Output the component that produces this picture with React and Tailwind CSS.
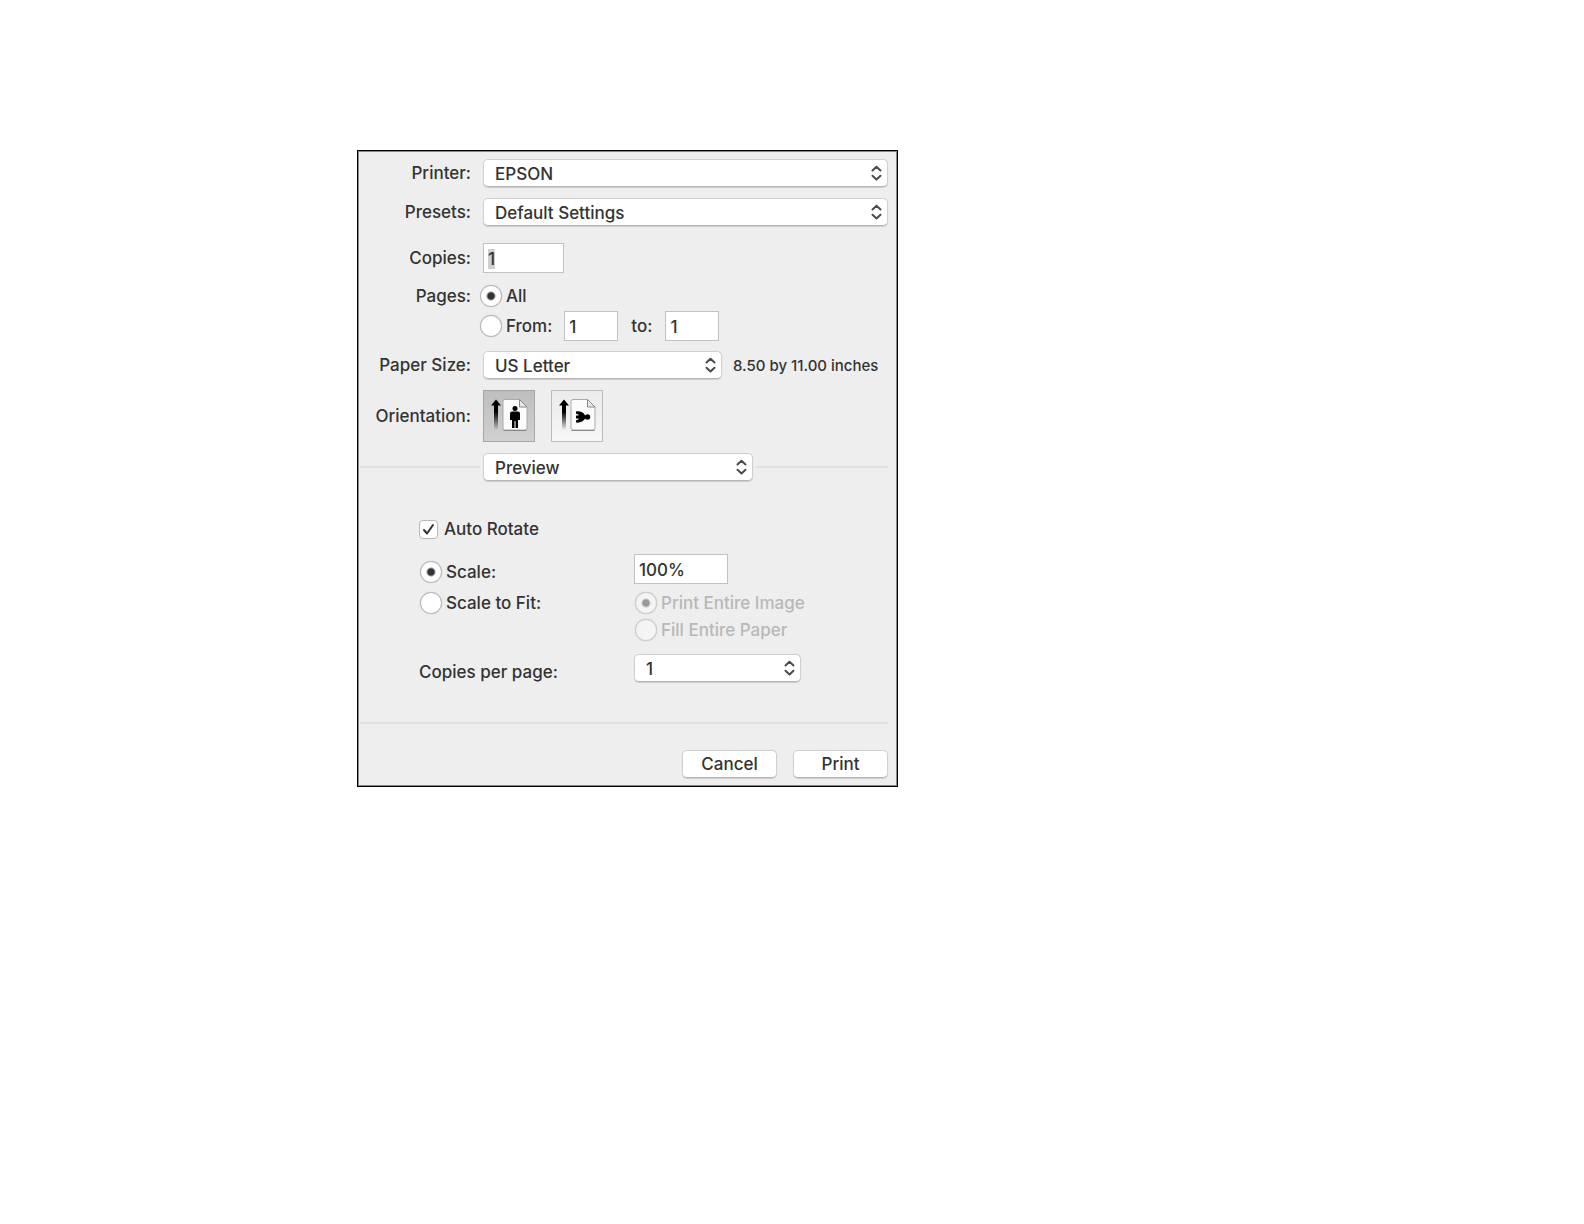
import React, { useEffect, useRef, useState } from 'react';

const inputClass =
  'h-[30px] border border-[#c2c2c2] bg-white pl-1 pt-[2px] text-[17px] font-medium text-[#333] outline-none';

const Select = ({ id, options, className }) => (
  <div className={`relative ${className}`}>
    <select
      id={id}
      className="block h-7 w-full appearance-none rounded-[5px] border border-[#d0d0d0] border-b-[#b4b4b4] bg-white pl-[11px] pr-7 pt-px text-[17px] font-medium leading-6 text-[#333] shadow-[0_1px_1px_rgba(0,0,0,0.14)] outline-none"
    >
      {options.map((option) => (
        <option key={option}>{option}</option>
      ))}
    </select>
    <svg
      className="pointer-events-none absolute right-1.5 top-1.5 h-4 w-[11px]"
      viewBox="0 0 11 16"
      fill="none"
      stroke="#4a4a4a"
      strokeWidth="2"
      strokeLinecap="round"
      strokeLinejoin="round"
    >
      <path d="M1.5 5.5 5.5 1.8 9.5 5.5M1.5 10.8 5.5 14.5 9.5 10.8" />
    </svg>
  </div>
);

const Radio = ({ label, ...props }) => (
  <label className="flex h-6 items-center gap-1 whitespace-nowrap has-disabled:text-[#b8b8b8]">
    <input
      type="radio"
      className="size-[22px] shrink-0 appearance-none rounded-full border border-[#b8b8b8] bg-white shadow-[0_0_1px_rgba(0,0,0,0.25)] checked:bg-[radial-gradient(circle,#333_3px,transparent_5px)] disabled:border-[#cfcfcf] disabled:bg-[#f4f4f4] disabled:checked:bg-[radial-gradient(circle,#999_3px,transparent_5px)]"
      {...props}
    />
    {label}
  </label>
);

const OrientationIcon = ({ landscape }) => {
  const fade = landscape ? 'fade-landscape' : 'fade-portrait';
  return (
    <svg className="size-full" viewBox="0 0 50 50">
      <defs>
        <linearGradient id={fade} x1="0" y1="0" x2="0" y2="1">
          <stop offset="0.3" stopColor="#000" />
          <stop offset="1" stopColor="#000" stopOpacity="0" />
        </linearGradient>
      </defs>
      {/* Feed direction arrow */}
      <path d="M12 8.5 17 14.5H7Z" fill="#000" />
      <rect x="10" y="13" width="4" height="26" fill={`url(#${fade})`} />
      {/* Sheet with folded corner */}
      <path d="M21 8.5H35.5L43 16V37Q43 39 41 39H21Q19 39 19 37V10.5Q19 8.5 21 8.5Z" fill="#fbfbfb" stroke="#aaa" />
      <path d="M19.5 39.5H42.5" stroke="#888" />
      <path d="M35.5 8.5V16H43Z" fill="#e8e8e8" stroke="#888" />
      {landscape ? (
        <g fill="#000">
          <circle cx="35.5" cy="26" r="2.7" />
          <rect x="31" y="25" width="4" height="2" />
          <path d="M33 24.2C31.5 21.6 28.5 20 24 20.4V22.8L26.5 23.6V24.6H24V27.4H26.5V28.4L24 29.2V31.6C28.5 32 31.5 30.4 33 27.8Z" />
        </g>
      ) : (
        <g fill="#000">
          <circle cx="31" cy="17.5" r="2.5" />
          <path d="M28 20.5H34Q36 20.5 36 22.5V29H34V37H31.5V30H30.5V37H28V29H26V22.5Q26 20.5 28 20.5Z" />
        </g>
      )}
    </svg>
  );
};

const labelClass = 'text-right whitespace-nowrap';
const rowClass = 'grid grid-cols-[113px_1fr] items-center gap-x-3';
const buttonClass =
  'h-7 rounded-[5px] border border-[#d0d0d0] border-b-[#b4b4b4] bg-white text-[17px] font-medium leading-6 text-[#333] shadow-[0_1px_1px_rgba(0,0,0,0.14)]';

const PrintDialog = () => {
  const copiesRef = useRef(null);
  const [copies, setCopies] = useState('1');
  const [pages, setPages] = useState('all');
  const [orientation, setOrientation] = useState('portrait');
  const [autoRotate, setAutoRotate] = useState(true);
  const [scaling, setScaling] = useState('scale');

  // The copies field starts focused with its value selected
  useEffect(() => {
    copiesRef.current.focus();
    copiesRef.current.select();
  }, []);

  const orientationClass = (value) =>
    `size-[52px] border ${
      orientation === value
        ? 'border-[#a6a6a6] bg-linear-to-b from-[#bebebe] to-[#d0d0d0]'
        : 'border-[#bcbcbc] bg-linear-to-b from-[#ebebeb] to-[#f6f6f6]'
    }`;

  return (
    <form
      onSubmit={(e) => e.preventDefault()}
      className="w-full max-w-[541px] border border-black bg-[#eeeeee] pb-2 pr-[9px] pt-2 text-[17px] font-medium leading-6 text-[#333] shadow-[inset_0_0_0_1px_#888]"
    >
      <div className={rowClass}>
        <label htmlFor="printer" className={labelClass}>Printer:</label>
        <Select id="printer" options={['EPSON']} className="w-full" />
      </div>

      <div className={`${rowClass} mt-[11px]`}>
        <label htmlFor="presets" className={labelClass}>Presets:</label>
        <Select id="presets" options={['Default Settings']} className="w-full" />
      </div>

      <div className={`${rowClass} mt-[17px]`}>
        <label htmlFor="copies" className={labelClass}>Copies:</label>
        <input
          id="copies"
          ref={copiesRef}
          value={copies}
          onChange={(e) => setCopies(e.target.value)}
          className={`${inputClass} w-[81px] selection:bg-[#d0d0d0] selection:text-[#333]`}
        />
      </div>

      <div role="radiogroup" aria-labelledby="pages-label">
        <div className={`${rowClass} mt-[11px]`}>
          <span id="pages-label" className={labelClass}>Pages:</span>
          <div className="-ml-[3px]">
            <Radio label="All" name="pages" checked={pages === 'all'} onChange={() => setPages('all')} />
          </div>
        </div>
        <div className={`${rowClass} mt-[3px]`}>
          <span />
          <div className="-ml-[3px] flex items-center gap-3">
            <Radio label="From:" name="pages" checked={pages === 'range'} onChange={() => setPages('range')} />
            <input aria-label="From page" defaultValue="1" className={`${inputClass} w-[54px]`} />
            <label htmlFor="to-page" className="px-px">to:</label>
            <input id="to-page" defaultValue="1" className={`${inputClass} w-[54px]`} />
          </div>
        </div>
      </div>

      <div className={`${rowClass} mt-[10px]`}>
        <label htmlFor="paper-size" className={labelClass}>Paper Size:</label>
        <div className="flex items-center gap-[11px]">
          <Select id="paper-size" options={['US Letter']} className="w-[239px]" />
          <span className="whitespace-nowrap pt-0.5 text-[15px]">8.50 by 11.00 inches</span>
        </div>
      </div>

      <div className={`${rowClass} mt-[11px]`}>
        <span className={labelClass}>Orientation:</span>
        <div className="flex gap-4">
          <button
            type="button"
            aria-label="Portrait"
            aria-pressed={orientation === 'portrait'}
            onClick={() => setOrientation('portrait')}
            className={orientationClass('portrait')}
          >
            <OrientationIcon />
          </button>
          <button
            type="button"
            aria-label="Landscape"
            aria-pressed={orientation === 'landscape'}
            onClick={() => setOrientation('landscape')}
            className={orientationClass('landscape')}
          >
            <OrientationIcon landscape />
          </button>
        </div>
      </div>

      {/* Section picker sits in the divider line */}
      <div className="mt-[11px] flex items-center gap-[3px] pl-0.5">
        <div className="h-0.5 w-[120px] bg-[#e0e0e0]" />
        <Select id="section" options={['Preview']} className="w-[270px]" />
        <div className="h-0.5 flex-1 bg-[#e0e0e0]" />
      </div>

      <div className="pl-[61px]">
        <label className="mt-9 flex h-6 items-center gap-1.5">
          <input
            type="checkbox"
            checked={autoRotate}
            onChange={(e) => setAutoRotate(e.target.checked)}
            className="peer size-[19px] appearance-none rounded-[4px] border border-[#b8b8b8] bg-white"
          />
          <svg
            className="pointer-events-none invisible -ml-[25px] size-[19px] peer-checked:visible"
            viewBox="0 0 19 19"
            fill="none"
            stroke="#333"
            strokeWidth="2"
            strokeLinecap="round"
            strokeLinejoin="round"
          >
            <path d="M5 10 8 13.5 14 5" />
          </svg>
          Auto Rotate
        </label>

        <div className="mt-[13px] grid grid-cols-[214px_1fr] items-end pl-px">
          <Radio label="Scale:" name="scaling" checked={scaling === 'scale'} onChange={() => setScaling('scale')} />
          <input aria-label="Scale percentage" defaultValue="100%" className={`${inputClass} w-[94px]`} />
        </div>

        <div className="mt-[7px] grid grid-cols-[215px_1fr] items-start pl-px">
          <Radio label="Scale to Fit:" name="scaling" checked={scaling === 'fit'} onChange={() => setScaling('fit')} />
          <div className="flex flex-col gap-[3px]">
            <Radio label="Print Entire Image" name="fit" defaultChecked disabled={scaling !== 'fit'} />
            <Radio label="Fill Entire Paper" name="fit" disabled={scaling !== 'fit'} />
          </div>
        </div>

        <div className="mt-3 grid grid-cols-[215px_1fr] items-start">
          <label htmlFor="per-page" className="pt-1.5">Copies per page:</label>
          <Select id="per-page" options={['1', '2', '4']} className="w-[167px]" />
        </div>
      </div>

      <div className="ml-0.5 mt-[38px] h-0.5 bg-[#e0e0e0]" />

      <div className="mt-[26px] flex justify-end gap-4">
        <button type="button" className={`${buttonClass} w-[95px]`}>Cancel</button>
        <button type="submit" className={`${buttonClass} w-[95px]`}>Print</button>
      </div>
    </form>
  );
};

const App = () => (
  <main className="min-h-screen bg-white pl-[357px] pt-[150px] font-[Inter,'Liberation_Sans',sans-serif]">
    <PrintDialog />
  </main>
);

export default App;
